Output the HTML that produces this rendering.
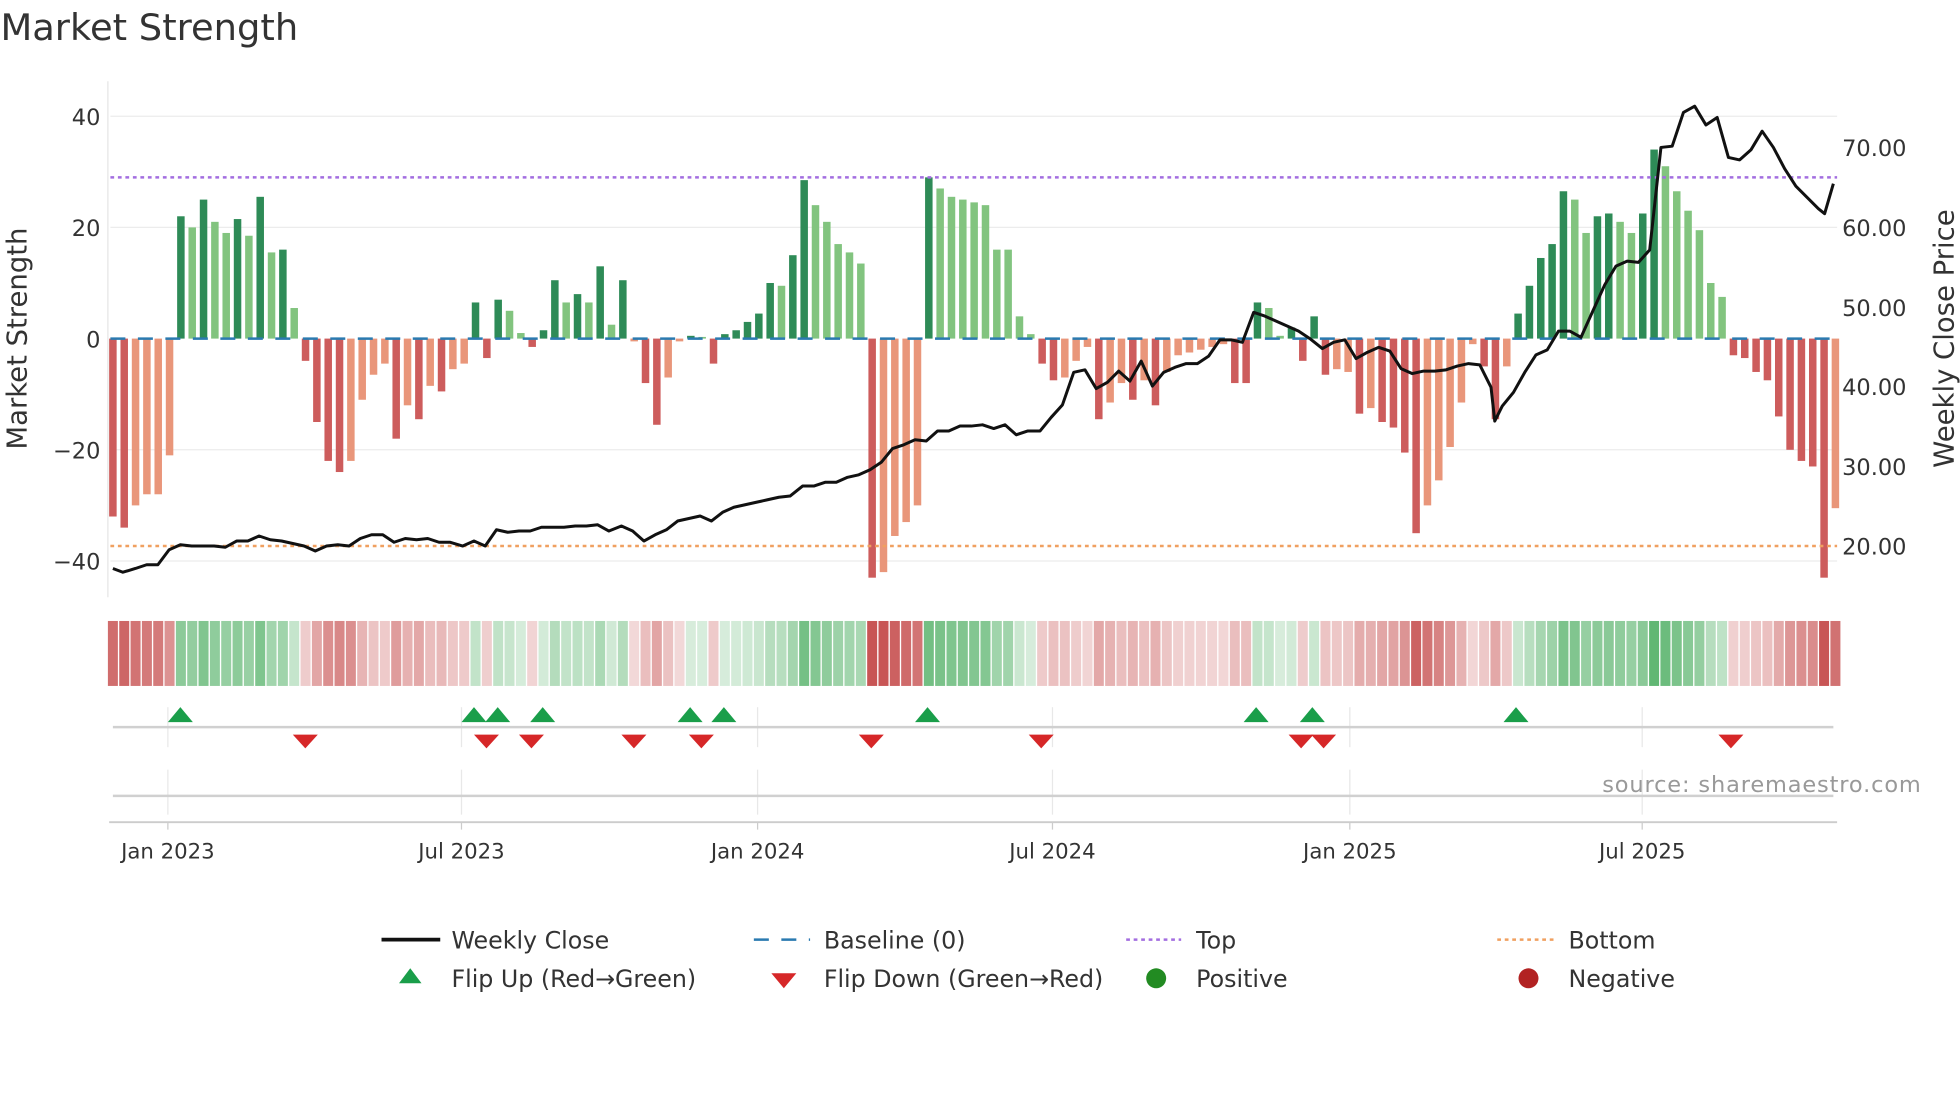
<!DOCTYPE html>
<html><head><meta charset="utf-8"><style>
html,body{margin:0;padding:0;background:#fff;width:1960px;height:1102px;overflow:hidden}
svg{display:block}
text{font-family:"DejaVu Sans","Liberation Sans",sans-serif;fill:#333}
</style></head><body>
<svg id="s" width="1960" height="1102" viewBox="0 0 1568 882" xmlns="http://www.w3.org/2000/svg">
<text x="0" y="32" font-size="29.5">Market Strength</text>
<line x1="86" y1="65" x2="86" y2="478" stroke="#e6e6e6"/>
<g stroke="#ececec" stroke-width="1">
<line x1="88" y1="93" x2="1470" y2="93"/><line x1="88" y1="182" x2="1470" y2="182"/>
<line x1="88" y1="360" x2="1470" y2="360"/><line x1="88" y1="449" x2="1470" y2="449"/>
</g>
<g font-size="18" text-anchor="end">
<text x="80" y="100">40</text><text x="80" y="189">20</text><text x="80" y="278">0</text>
<text x="80" y="367">−20</text><text x="80" y="456">−40</text>
</g>
<g font-size="18">
<text x="1474" y="125">70.00</text><text x="1474" y="189">60.00</text><text x="1474" y="253">50.00</text>
<text x="1474" y="316">40.00</text><text x="1474" y="380">30.00</text><text x="1474" y="444">20.00</text>
</g>
<text transform="translate(21,271) rotate(-90)" font-size="22" text-anchor="middle">Market Strength</text>
<text transform="translate(1563,271) rotate(-90)" font-size="22" text-anchor="middle">Weekly Close Price</text>
<g id="bars"></g>
<line x1="88" y1="271" x2="1470" y2="271" stroke="#2a7ab0" stroke-width="2" stroke-dasharray="12,10"/>
<line x1="88" y1="142" x2="1470" y2="142" stroke="#a36ee0" stroke-width="2" stroke-dasharray="3,3"/>
<line x1="88" y1="437" x2="1470" y2="437" stroke="#f0a060" stroke-width="2" stroke-dasharray="3,3"/>
<polyline id="price" fill="none" stroke="#111" stroke-width="2.4" stroke-linejoin="round"/>
<g id="heat"></g>
<g stroke="#e8e8e8">
<line x1="134" y1="566" x2="134" y2="598"/><line x1="369" y1="566" x2="369" y2="598"/><line x1="606" y1="566" x2="606" y2="598"/><line x1="842" y1="566" x2="842" y2="598"/><line x1="1080" y1="566" x2="1080" y2="598"/><line x1="1314" y1="566" x2="1314" y2="598"/>
<line x1="134" y1="616" x2="134" y2="652"/><line x1="369" y1="616" x2="369" y2="652"/><line x1="606" y1="616" x2="606" y2="652"/><line x1="842" y1="616" x2="842" y2="652"/><line x1="1080" y1="616" x2="1080" y2="652"/><line x1="1314" y1="616" x2="1314" y2="652"/>
</g>
<line x1="90" y1="582" x2="1467" y2="582" stroke="#d0d0d0" stroke-width="2"/>
<line x1="90" y1="637" x2="1467" y2="637" stroke="#d0d0d0" stroke-width="2"/>
<g id="marks"></g>
<text x="1537" y="634" font-size="18" text-anchor="end" textLength="255" style="fill:#999">source: sharemaestro.com</text>
<line x1="87" y1="658" x2="1470" y2="658" stroke="#ccc" stroke-width="1.5"/>
<g stroke="#ccc"><line x1="134" y1="658" x2="134" y2="664"/><line x1="369" y1="658" x2="369" y2="664"/><line x1="606" y1="658" x2="606" y2="664"/><line x1="842" y1="658" x2="842" y2="664"/><line x1="1080" y1="658" x2="1080" y2="664"/><line x1="1314" y1="658" x2="1314" y2="664"/></g>
<g font-size="17" text-anchor="middle">
<text x="134" y="687">Jan 2023</text><text x="369" y="687">Jul 2023</text><text x="606" y="687">Jan 2024</text><text x="842" y="687">Jul 2024</text><text x="1080" y="687">Jan 2025</text><text x="1314" y="687">Jul 2025</text>
</g>
<g font-size="19">
<line x1="305" y1="752" x2="352" y2="752" stroke="#111" stroke-width="3"/><text x="361" y="759">Weekly Close</text>
<line x1="603" y1="752" x2="648" y2="752" stroke="#2a7ab0" stroke-width="2" stroke-dasharray="12,10"/><text x="659" y="759">Baseline (0)</text>
<line x1="901" y1="752" x2="945" y2="752" stroke="#a36ee0" stroke-width="2" stroke-dasharray="3,3"/><text x="957" y="759">Top</text>
<line x1="1198" y1="752" x2="1243" y2="752" stroke="#f0a060" stroke-width="2" stroke-dasharray="3,3"/><text x="1255" y="759">Bottom</text>
<polygon points="319,787 337,787 328,775" fill="#1a9e4a"/><text x="361" y="790">Flip Up (Red→Green)</text>
<polygon points="617,779 637,779 627,791" fill="#d62728"/><text x="659" y="790">Flip Down (Green→Red)</text>
<circle cx="925" cy="783" r="8" fill="#228b22"/><text x="957" y="790">Positive</text>
<circle cx="1223" cy="783" r="8" fill="#b22222"/><text x="1255" y="790">Negative</text>
</g>
</svg>
<script>
var d="-32d -34d -30l -28l -28l -21l 22d 20l 25d 21l 19l 21.5d 18.5l 25.5d 15.5l 16d 5.5l -4d -15d -22d -24d -22l -11l -6.5l -4.5l -18d -12l -14.5d -8.5l -9.5d -5.5l -4.5l 6.5d -3.5d 7d 5l 1l -1.5d 1.5d 10.5d 6.5l 8d 6.5l 13d 2.5l 10.5d -0.5l -8d -15.5d -7l -0.5l 0.5d 0.3l -4.5d 0.8d 1.5d 3d 4.5d 10d 9.5l 15d 28.5d 24l 21l 17l 15.5l 13.5l -43d -42l -35.5l -33l -30l 29d 27l 25.5l 25l 24.5l 24l 16l 16l 4l 0.8l -4.5d -7.5d -7l -4l -1.5l -14.5d -11.5l -8l -11d -7.5l -12d -6l -3l -2.5l -2l -1.5l -1l -8d -8d 6.5d 5.5l 0.5l 2d -4d 4d -6.5d -5.5l -6l -13.5d -12.5l -15d -16d -20.5d -35d -30l -25.5l -19.5l -11.5l -1l -5d -14.5d -5l 4.5d 9.5d 14.5d 17d 26.5d 25l 19l 22d 22.5d 21l 19l 22.5d 34d 31l 26.5l 23l 19.5l 10l 7.5l -3d -3.5d -6d -7.5d -14d -20d -22d -23d -43d -30.5l".split(" ");
var ns="http://www.w3.org/2000/svg",b=document.getElementById("bars"),h=document.getElementById("heat");
function el(p,t,a){var e=document.createElementNS(ns,t);for(var k in a)e.setAttribute(k,a[k]);p.appendChild(e);return e;}
d.forEach(function(s,i){var v=parseFloat(s),dk=s.slice(-1)=="d",x=90+9.07*i;
var y0=271,y1=271-v*4.45;var c=v>=0?(dk?"#2e8b57":"#82c47f"):(dk?"#cd5c5c":"#e9967a");
el(b,"rect",{x:x-3,y:Math.min(y0,y1),width:6,height:Math.max(0.8,Math.abs(y1-y0)),fill:c});
var a=Math.min(1,0.22+Math.abs(v)/40*0.8);
el(h,"rect",{x:x-4.5+0.5,y:497,width:8,height:52,fill:v>=0?"rgb(80,175,100)":"rgb(200,85,85)","fill-opacity":a});});
var p="90,455 98,458 108,455 117,452 126,452 135,440 144,436 153,437 162,437 171,437 180,438 189,433 198,433 207,429 216,432 225,433 234,435 243,437 252,441 261,437 270,436 279,437 288,431 297,428 306,428 315,434 324,431 333,432 342,431 351,434 360,434 370,437 379,433 388,437 397,424 406,426 415,425 424,425 433,422 442,422 451,422 460,421 469,421 478,420 487,425 497,421 506,425 515,433 524,428 533,424 542,417 551,415 560,413 569,417 578,410 587,406 596,404 605,402 614,400 623,398 632,397 642,389 651,389 660,386 669,386 678,382 687,380 696,376 705,370 714,359 723,356 732,352 741,353 750,345 759,345 768,341 777,341 786,340 795,343 804,340 813,348 822,345 832,345 841,334 850,324 859,298 868,296 877,311 886,306 895,297 904,305 913,289 922,309 931,298 940,294 949,291 958,291 967,285 976,272 985,272 994,274 1003,250 1012,253 1021,257 1030,261 1039,265 1048,271 1058,279 1067,274 1076,272 1085,287 1094,282 1103,278 1112,281 1121,295 1130,299 1139,297 1148,297 1157,296 1166,293 1175,291 1184,292 1193,310 1196,337 1202,325 1211,314 1220,298 1229,284 1238,280 1247,265 1256,265 1265,270 1274,250 1284,228 1293,213 1302,209 1311,210 1320,200 1329,118 1338,117 1347,90 1356,85 1365,100 1374,94 1383,126 1392,128 1401,120 1410,105 1419,118 1428,135 1437,149 1446,158 1455,167 1460,171 1467,147";
document.getElementById("price").setAttribute("points",p);
var m=document.getElementById("marks");
[144,379,398,434,552,579,742,1005,1050,1213].forEach(function(x){el(m,"polygon",{points:(x-10)+",578 "+(x+10)+",578 "+x+",566",fill:"#1a9e4a"});});
[244,389,425,507,561,697,833,1041,1059,1385].forEach(function(x){el(m,"polygon",{points:(x-10)+",588 "+(x+10)+",588 "+x+",599",fill:"#d62728"});});
</script>
</body></html>
